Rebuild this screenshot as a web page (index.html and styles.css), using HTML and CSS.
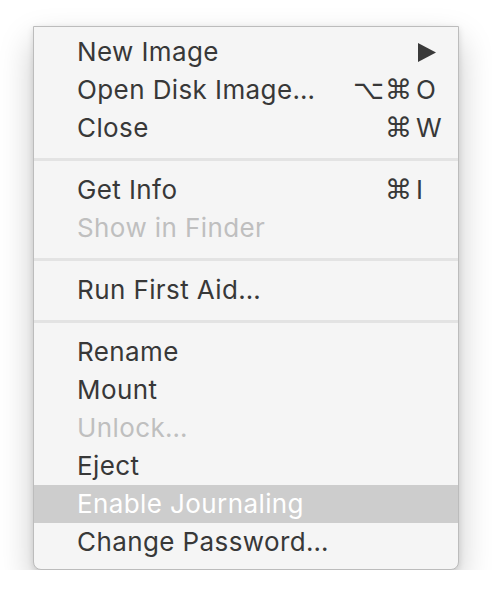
FILE: index.html
```html
<!DOCTYPE html>
<html>
<head>
<meta charset="utf-8">
<link rel="stylesheet" href="styles.css">
</head>
<body>
<div class="menu">
  <div class="item"><span class="label">New Image</span><span class="mods"></span><span class="key"><svg class="arrow" width="18" height="19" viewBox="0 0 18 19"><polygon points="0,0 18,9.5 0,19" fill="#3a3a3a"/></svg></span></div>
  <div class="item"><span class="label">Open Disk Image…</span><span class="mods">⌥⌘</span><span class="key">O</span></div>
  <div class="item"><span class="label">Close</span><span class="mods">⌘</span><span class="key">W</span></div>
  <div class="sep"></div>
  <div class="item"><span class="label">Get Info</span><span class="mods">⌘</span><span class="key">I</span></div>
  <div class="item disabled"><span class="label">Show in Finder</span></div>
  <div class="sep"></div>
  <div class="item"><span class="label">Run First Aid…</span></div>
  <div class="sep"></div>
  <div class="item"><span class="label">Rename</span></div>
  <div class="item"><span class="label">Mount</span></div>
  <div class="item disabled"><span class="label">Unlock…</span></div>
  <div class="item"><span class="label">Eject</span></div>
  <div class="item selected"><span class="label">Enable Journaling</span></div>
  <div class="item"><span class="label">Change Password…</span></div>
</div>
</body>
</html>
```
FILE: styles.css
```css
html, body {
  margin: 0;
  padding: 0;
  background: #ffffff;
}
body {
  padding: 26px 0 0 33px;
  font-family: Inter, "Noto Sans", "DejaVu Sans", sans-serif;
}
.menu {
  width: 424px;
  background: #f5f5f5;
  border: 1px solid #bcbcbc;
  border-radius: 0 0 8px 8px;
  padding: 6px 0 8px;
  box-shadow: 0 16px 34px rgba(0, 0, 0, 0.22), 0 2px 6px rgba(0, 0, 0, 0.12);
}
.item {
  height: 38px;
  display: grid;
  grid-template-columns: 1fr auto 32px;
  align-items: center;
  padding: 0 13px 0 43px;
  font-size: 26px;
  letter-spacing: 0.4px;
  color: #383838;
  line-height: 38px;
}
.label {
  white-space: nowrap;
}
.mods {
  text-align: right;
  font-family: "DejaVu Sans", sans-serif;
  font-size: 27px;
  letter-spacing: 1px;
}
.key {
  padding-left: 3px;
  display: flex;
  align-items: center;
}
.arrow {
  display: block;
  margin-left: 2px;
}
.disabled {
  color: #bfbfbf;
}
.selected {
  background: #cdcdcd;
  color: #ffffff;
}
.sep {
  height: 24px;
  display: flex;
  align-items: center;
}
.sep::before {
  content: "";
  display: block;
  width: 100%;
  height: 3px;
  background: #e3e3e3;
}
```
